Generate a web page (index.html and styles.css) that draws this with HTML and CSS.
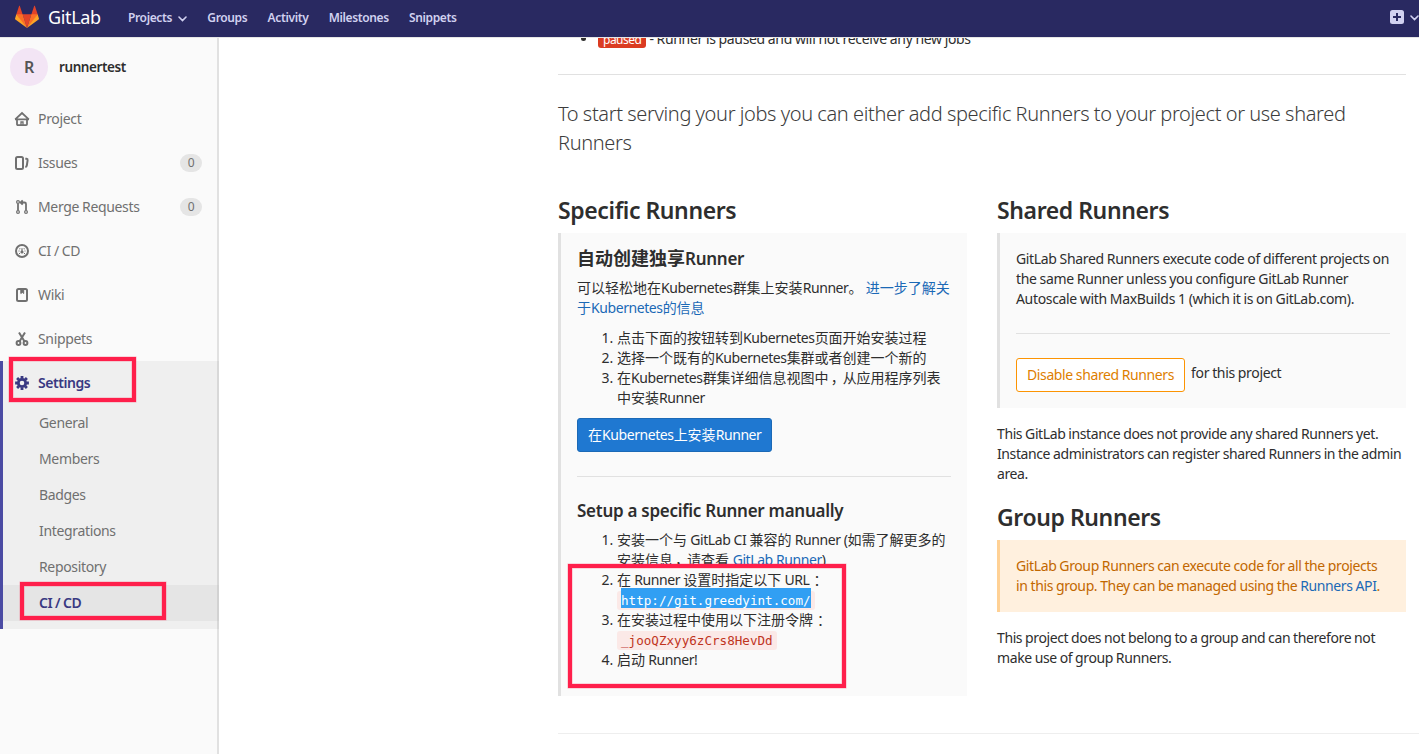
FILE: index.html
```html
<!DOCTYPE html>
<html lang="en">
<head>
<meta charset="utf-8">
<title>CI / CD Settings · runnertest · GitLab</title>
<link rel="stylesheet" href="styles.css">
</head>
<body>
<header class="navbar">
  <a class="brand">
    <svg class="tanuki" width="24" height="24" viewBox="0 0 36 36">
      <path fill="#e24329" d="M2 14l9.38 9v-9l-4-12.28c-.205-.632-1.176-.632-1.38 0z"/>
      <path fill="#e24329" d="M34 14l-9.38 9v-9l4-12.28c.205-.632 1.176-.632 1.38 0z"/>
      <path fill="#e24329" d="M18 34.38L11.38 14h13.24z"/>
      <path fill="#fc6d26" d="M18 34.38L11.38 14H2l6 9.5zM18 34.38L24.62 14H34l-6 9.5z"/>
      <path fill="#fca326" d="M2 14L.1 20.16c-.18.565 0 1.2.5 1.56l17.42 12.66zM34 14l1.9 6.16c.18.565 0 1.2-.5 1.56L18 34.38z"/>
    </svg>
    <span class="wordmark">GitLab</span>
  </a>
  <nav class="topnav">
    <a>Projects<svg width="9" height="6" viewBox="0 0 9 6"><path d="M1 1l3.5 3.5L8 1" fill="none" stroke="currentColor" stroke-width="1.6" stroke-linecap="round"/></svg></a>
    <a>Groups</a><a>Activity</a><a>Milestones</a><a>Snippets</a>
  </nav>
  <div class="create">
    <svg width="14" height="14" viewBox="0 0 14 14"><rect width="14" height="14" rx="2.5" fill="#d1d1f0"/><path d="M7 3v8M3 7h8" stroke="#292961" stroke-width="2"/></svg>
    <svg class="caret" width="9" height="6" viewBox="0 0 9 6"><path d="M1 1l3.5 3.5L8 1" fill="none" stroke="#d1d1f0" stroke-width="1.6" stroke-linecap="round"/></svg>
  </div>
</header>
<div class="page">
  <aside class="sidebar">
    <div class="project"><span class="avatar">R</span><strong>runnertest</strong></div>
    <a class="item"><svg class="icon" viewBox="0 0 16 16"><path d="M1.200 8.300L8 2l6.800 6.300M3 7.500v5.800a.9.9 0 0 0 .9.900h8.200a.9.9 0 0 0 .9-.9V7.500M1 8.300h14" stroke-width="1.800"/><path d="M7 14v-3h2v3" stroke-width="1.300"/></svg><span>Project</span></a>
    <a class="item"><svg class="icon" viewBox="0 0 16 16"><rect x="2" y="2" width="7" height="12" rx="1.500"/><path d="M11.300 3.800h1.200q1.300.2 1.100 1.500l-.8 5.300q-.2 1.200-1.500 1.400" /></svg><span>Issues</span><b class="badge">0</b></a>
    <a class="item"><svg class="icon thin" viewBox="0 0 16 16"><circle cx="4" cy="3" r="1.400"/><circle cx="4" cy="13" r="1.400"/><circle cx="12" cy="13" r="1.400"/><path stroke-width="1.800" d="M4 4.500v7M7.500 3.500h3q1.500 0 1.500 1.500v6.500M8.700 1.300L6.500 3.500l2.200 2.200"/></svg><span>Merge Requests</span><b class="badge">0</b></a>
    <a class="item"><svg class="icon" viewBox="0 0 16 16"><circle cx="8" cy="8" r="6"/><circle cx="8" cy="9" r="1.600" fill="currentColor" stroke="none"/><path stroke-width="1.200" d="M8 5.200v4M4.500 8h1M10.500 8h1M5.500 5.500l.7.7M10.500 5.500l-.7.7M5 10.500h1M10 10.500h1"/></svg><span>CI / CD</span></a>
    <a class="item"><svg class="icon" viewBox="0 0 16 16"><rect x="3" y="2" width="10" height="12" rx="1.500"/><path stroke-width="1" fill="currentColor" d="M6.800 2.500h2.900v4L8.300 5.400 6.800 6.500z"/></svg><span>Wiki</span></a>
    <a class="item"><svg class="icon" viewBox="0 0 16 16"><circle cx="4.500" cy="12" r="1.900"/><circle cx="11.500" cy="12" r="1.900"/><path d="M5.600 10.300L11 1.500M10.400 10.300L5 1.500" stroke-width="2"/></svg><span>Snippets</span></a>
    <div class="group">
      <a class="item current"><svg class="icon" viewBox="0 0 16 16"><circle cx="8" cy="8" r="3.700" stroke-width="2.800"/><path stroke-width="2.800" d="M8 1.100v2.400M8 12.500v2.400M1.100 8h2.400M12.500 8h2.400M3.100 3.100l1.700 1.700M11.200 11.200l1.700 1.700M3.100 12.900l1.700-1.700M11.200 4.800l1.700-1.700"/></svg><span>Settings</span></a>
      <a class="sub">General</a><a class="sub">Members</a><a class="sub">Badges</a><a class="sub">Integrations</a><a class="sub">Repository</a><a class="sub selected">CI / CD</a>
    </div>
  </aside>
  <main class="content">
    <ul class="legend"><li><span class="label">paused</span> - Runner is paused and will not receive any new jobs</li></ul>
    <hr>
    <p class="lead">To start serving your jobs you can either add specific Runners to your project or use shared<br>Runners</p>
    <div class="columns">
      <section>
        <h3>Specific Runners</h3>
        <div class="box specific" lang="zh-CN">
          <h4>自动创建独享<span class="en">Runner</span></h4>
          <p>可以轻松地在<span class="en">Kubernetes</span>群集上安装<span class="en">Runner</span>。<span class="en"> </span><a>进一步了解关<br>于<span class="en">Kubernetes</span>的信息</a></p>
          <ol>
            <li>点击下面的按钮转到<span class="en">Kubernetes</span>页面开始安装过程</li>
            <li>选择一个既有的<span class="en">Kubernetes</span>集群或者创建一个新的</li>
            <li class="two">在<span class="en">Kubernetes</span>群集详细信息视图中<span class="comma">，</span>从应用程序列表<br>中安装<span class="en">Runner</span></li>
          </ol>
          <a class="btn primary">在<span class="en">Kubernetes</span>上安装<span class="en">Runner</span></a>
          <hr>
          <h4><span class="en">Setup a specific Runner manually</span></h4>
          <ol>
            <li class="two">安装一个与<span class="en"> GitLab CI </span>兼容的<span class="en"> Runner (</span>如需了解更多的<br>安装信息<span class="comma">，</span>请查看 <a class="en">GitLab Runner</a>)</li>
            <li class="two">在<span class="en"> Runner </span>设置时指定以下<span class="en"> URL</span><span class="colon">：</span><br><code><span class="picked">http://git.greedyint.com/</span></code></li>
            <li class="two">在安装过程中使用以下注册令牌<span class="colon">：</span><br><code>_jooQZxyy6zCrs8HevDd</code></li>
            <li>启动<span class="en"> Runner!</span></li>
          </ol>
        </div>
      </section>
      <section>
        <h3>Shared Runners</h3>
        <div class="box shared">
          <p>GitLab Shared Runners execute code of different projects on<br>the same Runner unless you configure GitLab Runner<br>Autoscale with MaxBuilds 1 (which it is on GitLab.com).</p>
          <hr>
          <div class="toggle"><a class="btn warning">Disable shared Runners</a><span>for this project</span></div>
        </div>
        <p class="note">This GitLab instance does not provide any shared Runners yet.<br>Instance administrators can register shared Runners in the admin<br>area.</p>
        <h3 class="second">Group Runners</h3>
        <div class="box orange"><p>GitLab Group Runners can execute code for all the projects<br>in this group. They can be managed using the <a>Runners API</a>.</p></div>
        <p class="note">This project does not belong to a group and can therefore not<br>make use of group Runners.</p>
      </section>
    </div>
    <div class="divider"></div>
  </main>
</div>
<div class="mark mark-settings"></div>
<div class="mark mark-cicd"></div>
<div class="mark mark-url"></div>
</body>
</html>
```
FILE: styles.css
```css
* { box-sizing: border-box; }
body { margin: 0; height: 754px; overflow: hidden; position: relative; background: #fff; color: #2e2e2e; font: 14px/20px "Noto Sans", "Noto Sans CJK SC", sans-serif; letter-spacing: -.34px; word-spacing: -.3px; display: flex; flex-direction: column; }
p, h3, h4, ul, ol { margin: 0; padding: 0; }
a { color: #1b69b6; text-decoration: none; }
hr { border: 0; border-top: 1px solid #e1e1e1; margin: 24px 0; }
.navbar { height: 38px; flex: none; background: #292961; border-bottom: 1px solid #e5e5e5; display: flex; align-items: center; padding: 0 0 1px 15px; position: relative; z-index: 2; }
.brand { display: flex; align-items: center; width: 113px; gap: 9px; padding-bottom: 2px; }
.tanuki { margin-top: -1px; }
.wordmark { color: #fff; font-size: 18px; line-height: 24px; }
.topnav { display: flex; gap: 20.3px; font-size: 12px; font-weight: 600; letter-spacing: -.37px; }
.topnav a { color: #d1d1f0; display: flex; align-items: center; white-space: nowrap; }
.topnav svg { margin-left: 6px; margin-top: 2px; }
.create { margin-left: auto; display: flex; align-items: center; gap: 6px; padding-bottom: 2px; width: 29px; flex: none; }
.create svg { flex: none; }
.caret { margin-top: 2px; }
.page { display: flex; flex: 1; min-height: 0; }
.sidebar { width: 219px; flex: none; background: #fafafa; box-shadow: inset -2px 0 0 #e1e1e1; }
.project { display: flex; align-items: center; height: 58px; margin-bottom: 1px; padding-left: 10px; gap: 11px; font-size: 13.5px; letter-spacing: -.42px; }
.project strong { font-weight: 600; }
.avatar { width: 38px; height: 38px; border-radius: 50%; background: #f3e5f5; color: #555; display: flex; align-items: center; justify-content: center; font-size: 16px; font-weight: 600; }
.item { height: 44px; display: flex; align-items: center; color: #707070; padding: 0 17px 0 14px; }
.icon { width: 16px; height: 16px; margin-right: 8px; fill: none; stroke: currentColor; stroke-width: 2; flex: none; }
.thin { stroke-width: 1.2; }
.badge { margin-left: auto; width: 22px; height: 18px; border-radius: 9px; background: #e5e5e5; font-weight: 400; font-size: 12px; line-height: 18px; text-align: center; }
.group { background: linear-gradient(90deg, #4b4ba3 3px, #efefef 3px); padding-bottom: 8px; box-shadow: inset -2px 0 0 #d8d8d8; }
.current { color: #393982; font-weight: 600; letter-spacing: -.45px; }
.sub { display: flex; align-items: center; height: 36px; margin-left: 3px; padding-left: 36px; color: #707070; }
.selected { background: #e5e5e5; color: #393982; font-weight: 600; letter-spacing: -.48px; box-shadow: inset -2px 0 0 #d2d2d2; }
.content { flex: 1; padding: 0 13px 0 339px; min-width: 0; white-space: nowrap; }
.legend { margin: -9px 0 25px; padding-left: 40px; }
.legend + hr { margin: 0 0 24px; }
.label { background: #db3b21; color: #fff; font-size: 12px; line-height: 16px; display: inline-block; border-radius: 3px; padding: 0 5px; letter-spacing: -.5px; }
.lead { color: #3c3c3c; font-size: 20px; font-weight: 300; line-height: 29px; letter-spacing: -.35px; }
.columns { display: grid; grid-template-columns: 409px 409px; gap: 30px; height: 576px; padding-top: 37px; }
h3 { font-size: 23px; font-weight: 600; line-height: 32px; margin-bottom: 7px; letter-spacing: -.38px; }
h4 { font-size: 18px; font-weight: 600; line-height: 18px; height: 20px; margin-bottom: 9px; }
h4 .en { font-size: 17px; letter-spacing: -.27px; }
.box { background: #fafafa; border-left: 3px solid #e1e1e1; padding: 16px; }
.specific { height: 463px; letter-spacing: 0; word-spacing: 0; }
.specific p { height: 40px; }
.en { letter-spacing: -.42px; }
ol { padding-left: 40px; margin: 10px 0; }
h4 + ol { margin-top: 9px; }
.specific li { height: 20px; }
.specific .two { height: 40px; }
.comma, .colon { display: inline-block; width: 14px; height: 20px; vertical-align: top; text-indent: 4px; }
.comma { text-indent: 2px; }
.btn { display: inline-flex; align-items: center; height: 34px; border: 1px solid; border-radius: 3px; padding: 0 10px; vertical-align: top; }
.primary { background: #1f78d1; border-color: #1b69b6; color: #fff; }
.warning { background: #fff; border-color: #fc9403; color: #de7e00; letter-spacing: -.38px; }
code { font: 12.600px/20px "DejaVu Sans Mono", monospace; display: inline-block; height: 19px; margin-top: 1px; color: #c0341d; background: #fbe9e7; border-radius: 3px; padding: 0 4px; vertical-align: top; }
.picked { display: block; height: 20px; margin-top: -3px; padding-top: 3px; background: #319ff3; color: #fff; }
.shared { height: 175px; }
.toggle { display: flex; gap: 6px; }
.toggle span { line-height: 30px; }
.note { margin-top: 16px; letter-spacing: -.4px; }
.second { margin-top: 17px; }
.orange { background: #fff0de; border-color: #ffd195; color: #c26700; height: 72px; letter-spacing: -.38px; }
.divider { border-top: 1px solid #eee; margin-right: -13px; }
.mark { position: absolute; border: 4px solid #ff1f4b; z-index: 3; box-shadow: 0 0 0 .5px #ff1f4b55, inset 0 0 0 .5px #ff1f4b55; }
.mark-settings { left: 9px; top: 357px; width: 127px; height: 45px; }
.mark-cicd { left: 20px; top: 582px; width: 146px; height: 38px; }
.mark-url { left: 568px; top: 564px; width: 278px; height: 124px; }
```
